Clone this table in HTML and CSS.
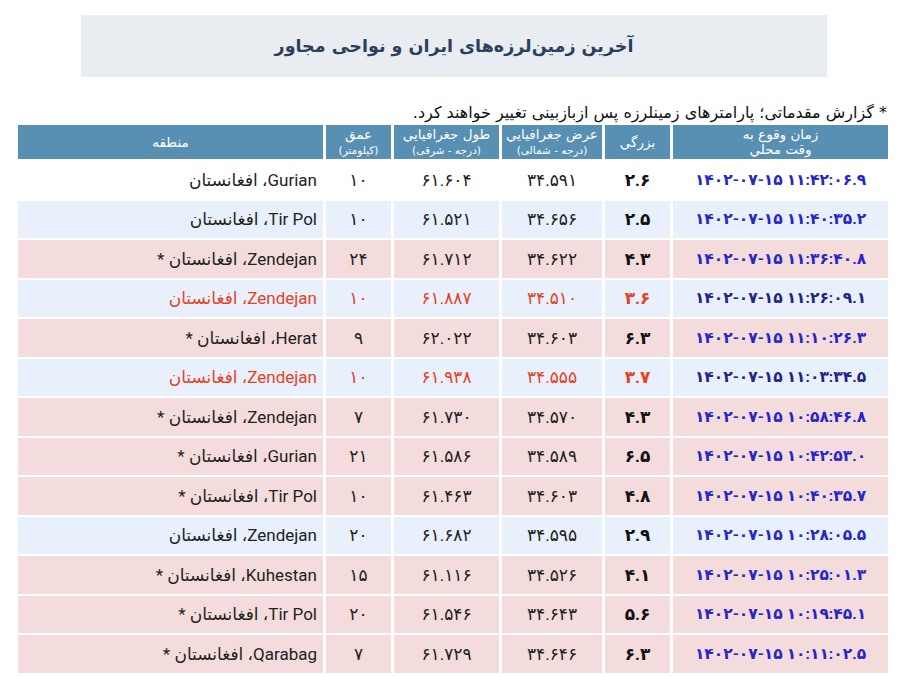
FILE: index.html
```html
<!DOCTYPE html>
<html lang="fa">
<head>
<meta charset="utf-8">
<title>آخرین زمین‌لرزه‌های ایران و نواحی مجاور</title>
<link rel="stylesheet" href="styles.css">
</head>
<body>
<div class="page">
  <div class="title-box"><h1 class="title">آخرین زمین‌لرزه‌های ایران و نواحی مجاور</h1></div>
  <p class="note" dir="rtl">* گزارش مقدماتی؛ پارامترهای زمینلرزه پس ازبازبینی تغییر خواهند کرد.</p>
  <table class="quakes" dir="rtl">
    <thead>
      <tr>
        <th class="c-time">زمان وقوع به<br>وقت محلي</th>
        <th class="c-mag">بزرگي</th>
        <th class="c-lat">عرض جغرافيايي<br><span class="sub">(درجه - شمالی)</span></th>
        <th class="c-lon">طول جغرافيايي<br><span class="sub">(درجه - شرقی)</span></th>
        <th class="c-dep">عمق<br><span class="sub">(کیلومتر)</span></th>
        <th class="c-reg">منطقه</th>
      </tr>
    </thead>
    <tbody>
      <tr class="r-white"><td class="time"><span dir="ltr">۱۴۰۲-۰۷-۱۵ ۱۱:۴۲:۰۶.۹</span></td><td class="mag">۲.۶</td><td>۳۴.۵۹۱</td><td>۶۱.۶۰۴</td><td>۱۰</td><td class="reg">Gurian، افغانستان</td></tr>
      <tr class="r-blue"><td class="time"><span dir="ltr">۱۴۰۲-۰۷-۱۵ ۱۱:۴۰:۳۵.۲</span></td><td class="mag">۲.۵</td><td>۳۴.۶۵۶</td><td>۶۱.۵۲۱</td><td>۱۰</td><td class="reg">Tir Pol، افغانستان</td></tr>
      <tr class="r-pink"><td class="time"><span dir="ltr">۱۴۰۲-۰۷-۱۵ ۱۱:۳۶:۴۰.۸</span></td><td class="mag">۴.۳</td><td>۳۴.۶۲۲</td><td>۶۱.۷۱۲</td><td>۲۴</td><td class="reg">Zendejan، افغانستان *</td></tr>
      <tr class="r-blue red"><td class="time"><span dir="ltr">۱۴۰۲-۰۷-۱۵ ۱۱:۲۶:۰۹.۱</span></td><td class="mag">۳.۶</td><td>۳۴.۵۱۰</td><td>۶۱.۸۸۷</td><td>۱۰</td><td class="reg">Zendejan، افغانستان</td></tr>
      <tr class="r-pink"><td class="time"><span dir="ltr">۱۴۰۲-۰۷-۱۵ ۱۱:۱۰:۲۶.۳</span></td><td class="mag">۶.۳</td><td>۳۴.۶۰۳</td><td>۶۲.۰۲۲</td><td>۹</td><td class="reg">Herat، افغانستان *</td></tr>
      <tr class="r-blue red"><td class="time"><span dir="ltr">۱۴۰۲-۰۷-۱۵ ۱۱:۰۳:۳۴.۵</span></td><td class="mag">۳.۷</td><td>۳۴.۵۵۵</td><td>۶۱.۹۳۸</td><td>۱۰</td><td class="reg">Zendejan، افغانستان</td></tr>
      <tr class="r-pink"><td class="time"><span dir="ltr">۱۴۰۲-۰۷-۱۵ ۱۰:۵۸:۴۶.۸</span></td><td class="mag">۴.۳</td><td>۳۴.۵۷۰</td><td>۶۱.۷۳۰</td><td>۷</td><td class="reg">Zendejan، افغانستان *</td></tr>
      <tr class="r-pink"><td class="time"><span dir="ltr">۱۴۰۲-۰۷-۱۵ ۱۰:۴۲:۵۳.۰</span></td><td class="mag">۶.۵</td><td>۳۴.۵۸۹</td><td>۶۱.۵۸۶</td><td>۲۱</td><td class="reg">Gurian، افغانستان *</td></tr>
      <tr class="r-pink"><td class="time"><span dir="ltr">۱۴۰۲-۰۷-۱۵ ۱۰:۴۰:۳۵.۷</span></td><td class="mag">۴.۸</td><td>۳۴.۶۰۳</td><td>۶۱.۴۶۳</td><td>۱۰</td><td class="reg">Tir Pol، افغانستان *</td></tr>
      <tr class="r-blue"><td class="time"><span dir="ltr">۱۴۰۲-۰۷-۱۵ ۱۰:۲۸:۰۵.۵</span></td><td class="mag">۲.۹</td><td>۳۴.۵۹۵</td><td>۶۱.۶۸۲</td><td>۲۰</td><td class="reg">Zendejan، افغانستان</td></tr>
      <tr class="r-pink"><td class="time"><span dir="ltr">۱۴۰۲-۰۷-۱۵ ۱۰:۲۵:۰۱.۳</span></td><td class="mag">۴.۱</td><td>۳۴.۵۲۶</td><td>۶۱.۱۱۶</td><td>۱۵</td><td class="reg">Kuhestan، افغانستان *</td></tr>
      <tr class="r-pink"><td class="time"><span dir="ltr">۱۴۰۲-۰۷-۱۵ ۱۰:۱۹:۴۵.۱</span></td><td class="mag">۵.۶</td><td>۳۴.۶۴۳</td><td>۶۱.۵۴۶</td><td>۲۰</td><td class="reg">Tir Pol، افغانستان *</td></tr>
      <tr class="r-pink"><td class="time"><span dir="ltr">۱۴۰۲-۰۷-۱۵ ۱۰:۱۱:۰۲.۵</span></td><td class="mag">۶.۳</td><td>۳۴.۶۴۶</td><td>۶۱.۷۲۹</td><td>۷</td><td class="reg">Qarabag، افغانستان *</td></tr>
    </tbody>
  </table>
</div>
</body>
</html>
```

FILE: styles.css
```css
html, body {
  margin: 0;
  padding: 0;
  background: #ffffff;
}

.page {
  width: 903px;
  padding-top: 15px;
  font-family: "DejaVu Sans", sans-serif;
}

.title-box {
  margin-left: 81px;
  width: 746px;
  height: 62px;
  background: #e9ecf1;
  display: flex;
  align-items: center;
  justify-content: center;
}

.title {
  margin: 0;
  font-family: "DejaVu Sans", sans-serif;
  font-size: 17.5px;
  font-weight: bold;
  color: #2c3f5e;
}

.note {
  margin: 25px 16px 0 0;
  height: 21px;
  line-height: 21px;
  font-size: 16px;
  color: #111111;
  text-align: right;
}

.quakes {
  margin-left: 15px;
  border-collapse: separate;
  border-spacing: 3px 2px;
  table-layout: fixed;
  width: 876px;
  font-family: Roboto, "DejaVu Sans", sans-serif;
}

.quakes th {
  background: #5790b2;
  color: #ffffff;
  font-family: "DejaVu Sans", sans-serif;
  font-weight: normal;
  font-size: 13.5px;
  line-height: 15px;
  height: 34px;
  padding: 0 4px;
  box-sizing: border-box;
  vertical-align: middle;
  text-align: center;
}

.quakes th .sub {
  font-size: 10.5px;
}

.c-time { width: 215px; }
.c-mag { width: 65px; }
.c-lat { width: 100px; }
.c-lon { width: 105px; }
.c-dep { width: 65px; }
.c-reg { width: 305px; }

.quakes td {
  height: 37.5px;
  padding: 0;
  box-sizing: border-box;
  text-align: center;
  vertical-align: middle;
  font-size: 17px;
  color: #222222;
}

.quakes td.time {
  color: #2626cc;
  font-weight: bold;
  font-size: 15.5px;
}

.quakes td.mag {
  font-weight: bold;
  color: #111111;
}

.quakes td.reg {
  text-align: right;
  padding-right: 6px;
  font-size: 17px;
}

.r-white td { background: #ffffff; }
.r-blue td { background: #e8f0fb; }
.r-pink td { background: #f5dcdc; }

.red td { color: #e8401e; }
.red td.mag { color: #e8401e; }
.red td.time { color: #23238c; }
```
